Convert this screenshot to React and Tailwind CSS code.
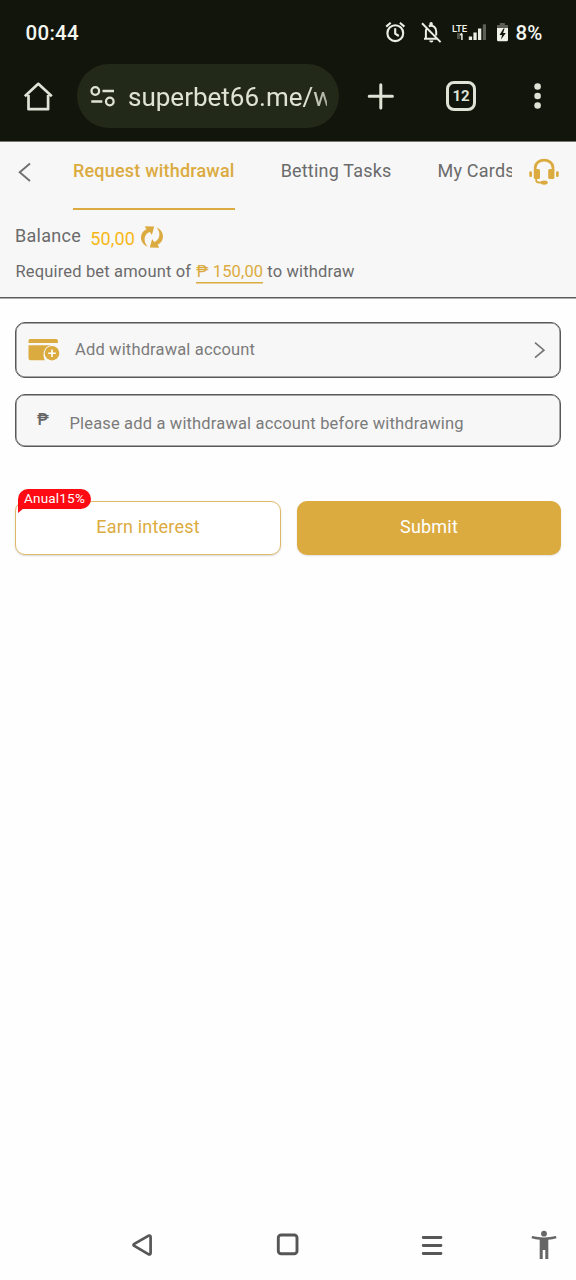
import React from "react";

function Icon({ box, className, children }) {
  const [, , w, h] = box.split(" ");
  return (
    <svg viewBox={box} width={w} height={h} fill="none" className={`shrink-0 ${className || ""}`}>
      {children}
    </svg>
  );
}

function StatusBar() {
  return (
    <div className="flex h-16 items-center pl-[25.5px] text-[#f4f5ef]">
      <span className="w-[358.5px] pt-0.5 text-[20.5px] font-medium tracking-[0.3px]">00:44</span>
      <Icon box="384 20 23 24">
        <g stroke="#eceee4" strokeWidth="2.1">
          <circle cx="395.3" cy="33.2" r="7.9" />
          <path d="M395.2 28.3v5.4l3.6 2.3M386.2 26.6l4.5-3.8M404.4 26.6l-4.5-3.8" />
        </g>
      </Icon>
      <Icon box="407 20 36 24">
        <path
          d="M425.9 39v-7.5c0-1.2.3-2.3.9-3.2M428.8 26.2c4-1.6 7.4 1 7.4 5.4v4M424 38.8h13.5M422 23.3l18.6 18.8"
          stroke="#eceee4"
          strokeWidth="2"
        />
        <path d="M429.4 25v-1.3a1.7 1.7 0 0 1 3.4 0V25zM429.2 40.5h4.2a2.1 2.1 0 0 1-4.2 0z" fill="#eceee4" />
      </Icon>
      <div className="relative ml-[9px] h-6 w-[36px]">
        <Icon box="452 20 36 24">
          <path d="M457 33h3.2v6H457z" fill="#4d4f48" />
          <path d="M461.9 40v-6.5M460.3 35.3l1.6-2" stroke="#eceee4" strokeWidth="1.5" />
          <path d="M468.8 36.5h3.3V40h-3.3zM473.4 32.5h3.3V40h-3.3zM478 28.6h3.3V40H478z" fill="#eceee4" />
          <path d="M482.800 24.300h3.200V40h-3.200z" fill="#5d5f57" />
        </Icon>
        <span className="absolute top-[4px] left-0 text-[9.5px] leading-[10px] font-medium">LTE</span>
      </div>
      <Icon box="488 20 28 24">
        <path d="M499.800 23h5v2h3.200v4.500h-11V25h2.800z" fill="#5d5f57" />
        <path d="M497 28h11v12a1.300 1.300 0 0 1-1.300 1.200h-8.400A1.300 1.300 0 0 1 497 40z" fill="#f1f3ea" />
        <path d="M503.500 28.500l-4 6.500h2.500l-1 4.500 4.800-6.500h-2.700l1.500-4.500z" fill="#12150c" />
      </Icon>
      <span className="-ml-[0.5px] pt-0.5 text-[20.5px] font-medium">8%</span>
    </div>
  );
}

function BrowserBar() {
  return (
    <div className="flex h-16 items-center">
      <Icon box="22 80 33 33" className="ml-[22px]">
        <path
          d="M28.500 95v14.200h19.600V95M24.800 96.200l13.500-12.400 13.500 12.400"
          stroke="#dfe3d6"
          strokeWidth="2.700"
          strokeLinejoin="round"
        />
      </Icon>
      <div className="ml-[22px] flex h-16 w-[262px] items-center rounded-full bg-[#232919] pl-[12px]">
        <Icon box="89 84 28 24">
          <g stroke="#dfe3d6" strokeWidth="2.300">
            <circle cx="95.300" cy="91" r="3.800" />
            <circle cx="109.800" cy="101.500" r="3.800" />
            <path d="M102.500 91h11.500M91.300 101.500h11" />
          </g>
        </Icon>
        <div className="ml-[11px] w-[199px] overflow-hidden pt-[2px] text-[26px] leading-8 whitespace-nowrap text-[#dfe3d6] [mask-image:linear-gradient(to_right,black_180px,transparent_245px)]">
          superbet66.me/w
        </div>
      </div>
      <Icon box="366 82 30 30" className="ml-[27px]">
        <path d="M369.200 97.300h23.200M380.800 85.700v23.200" stroke="#dfe3d6" strokeWidth="3" strokeLinecap="round" />
      </Icon>
      <div className="ml-[50px] flex size-[30px] items-center justify-center rounded-[8px] border-3 border-[#dfe3d6] text-[15px] font-bold text-[#dfe3d6]">
        12
      </div>
      <Icon box="530 80 15 32" className="ml-[54px]">
        <g fill="#dfe3d6">
          <circle cx="537.600" cy="86.500" r="3.300" />
          <circle cx="537.600" cy="96" r="3.300" />
          <circle cx="537.600" cy="105.500" r="3.300" />
        </g>
      </Icon>
    </div>
  );
}

const refreshArrow =
  "M147.500 246.500C139.300 243.500 138.800 232.500 146.400 229.200L144.800 226.300L154.200 226.600L151.900 235L149.800 232C144.800 233.500 142.300 240.500 147.500 246.500z";

function PageHead() {
  return (
    <section className="flex h-[157px] shrink-0 flex-col border-t border-b border-t-[#77776f] border-b-[#5c5c5f] bg-[#f7f7f7] text-[#6b6b6b] shadow-[0_0.5px_0_#5c5c5f]">
      <div className="flex h-[68px]">
        <Icon box="15 160 20 24" className="mt-[18px] ml-[15px]">
          <path d="M30 163.500L19.700 172.200l10.300 8.800" stroke="#707070" strokeWidth="1.900" />
        </Icon>
        <nav className="ml-[38px] flex w-[439px] gap-[46px] overflow-hidden text-[18px] leading-6 tracking-[0.200px] whitespace-nowrap">
          <div className="h-[68px] border-b-2 border-[#dcab40] pt-[17px] font-medium text-[#dcab40]">
            Request withdrawal
          </div>
          <div className="pt-[17px]">Betting Tasks</div>
          <div className="pt-[17px]">My Cards</div>
        </nav>
        <Icon box="528 157 32 30" className="mt-[15px] ml-4">
          <path d="M535.200 171v-3C535.200 157.600 553 157.600 553 168v3" stroke="#dcab40" strokeWidth="2.700" />
          <path d="M536.200 178v2.200c0 1.500 1.200 2.300 3 2.300h3" stroke="#dcab40" strokeWidth="1.800" />
          <g fill="#dcab40">
            <rect x="533.800" y="169" width="6.200" height="10" rx="1.500" />
            <rect x="548.200" y="169" width="6.200" height="10" rx="1.500" />
            <rect x="529.300" y="171.300" width="2.700" height="5.700" rx="1.200" />
            <rect x="556" y="171.300" width="2.700" height="5.700" rx="1.200" />
            <ellipse cx="544.200" cy="182.600" rx="3.500" ry="2.200" />
          </g>
        </Icon>
      </div>
      <div className="mt-[14px] flex h-6 pl-[15px] text-[18px] leading-6">
        <span className="tracking-[0.300px]">Balance</span>
        <span className="ml-[9px] pt-[3px] tracking-[0.150px] text-[#f6b715]">50,00</span>
        <Icon box="140 225 24 24" className="mt-px ml-[5px]">
          <g fill="#dcab40">
            <path d={refreshArrow} />
            <path d={refreshArrow} transform="rotate(180 152 237)" />
          </g>
        </Icon>
      </div>
      <div className="mt-[13px] flex pl-[15.500px] text-[16.500px] leading-[22px] tracking-[0.160px]">
        <span>Required bet amount of</span>
        <span className="ml-[5px] h-[22px] border-b border-[#dcab40] text-[#dcab40] shadow-[0_0.5px_0_#dcab40]">
          ₱ 150,00
        </span>
        <span className="ml-[4px]">to withdraw</span>
      </div>
    </section>
  );
}

export default function App() {
  return (
    <div className="flex h-[1280px] w-[576px] flex-col overflow-hidden bg-[#fefefe] font-['Roboto',sans-serif]">
      <header className="flex h-[141px] shrink-0 flex-col bg-[#12150c]">
        <StatusBar />
        <BrowserBar />
      </header>
      <PageHead />

      <main className="flex flex-1 flex-col px-[15px] pt-[24px]">
        <button className="flex h-[56px] w-[546px] items-center rounded-[10px] border border-[#58585a] bg-[#f7f7f7] text-[16.500px] tracking-[0.160px] text-[#7b7b7b] shadow-[inset_0_0_0_0.500px_#58585a]">
          <Icon box="28 338 33 24" className="ml-[12px]">
            <path
              d="M28.500 343v-2.300q0-1.700 1.700-1.700h26q1.700 0 1.700 1.700v2.300zM28.500 345.300h22.500c-5.500.5-9.500 7-6.300 14.900H30.500q-2 0-2-2z"
              fill="#dcab40"
            />
            <circle cx="52" cy="353.200" r="7.300" fill="#dcab40" />
            <path d="M52 349.400v7.600M48.200 353.200h7.600" stroke="#fff" strokeWidth="1.600" />
          </Icon>
          <span className="ml-[14px]">Add withdrawal account</span>
          <Icon box="532 340 16 20" className="mr-[12px] ml-auto">
            <path d="M535 342.700l8.900 7.500-8.900 7.500" stroke="#77777a" strokeWidth="1.700" />
          </Icon>
        </button>
        <div className="mt-4 flex h-[53px] w-[546px] items-center rounded-[10px] border border-[#58585a] bg-[#f7f7f7] text-[16.500px] tracking-[0.160px] text-[#7b7b7b] shadow-[inset_0_0_0_0.500px_#58585a]">
          <span className="mb-px ml-[21px] w-[32.500px] text-[16px] font-medium text-[#666]">₱</span>
          <span className="mt-[8px]">Please add a withdrawal account before withdrawing</span>
        </div>
        <div className="mt-[54px] flex gap-4 text-[18px] leading-6 tracking-[0.200px]">
          <button className="relative h-[54px] w-[266px] rounded-[10px] border border-[#dfb96a] bg-white pb-[2px] text-[#dcab40] shadow-[0_1px_2px_rgba(0,0,0,0.15)]">
            Earn interest
            <span className="absolute -top-[13px] left-[2px] flex h-5 w-[73px] items-center justify-center rounded-[10px] rounded-bl-none bg-[#fd0a12] pb-[3px] text-[13.500px] text-white">
              Anual15%
            </span>
            <Icon box="18 508 7 5" className="absolute top-[6px] left-[2px]">
              <path d="M18 508h6l-6 5z" fill="#fd0a12" />
            </Icon>
          </button>
          <button className="h-[54px] w-[264px] rounded-[10px] bg-[#dcab40] pb-[2px] text-white shadow-[0_1px_2px_rgba(0,0,0,0.12)]">
            Submit
          </button>
        </div>
      </main>

      <footer className="flex h-[72px] shrink-0 items-center pt-[2px]">
        <Icon box="130 1230 24 30" className="ml-[130px]">
          <path
            d="M148.300 1235.800l-14 8.100q-1.600 1 0 2l14 8.300q2.300.800 2.300-1.300v-16q0-2-2.300-1.100z"
            stroke="#565656"
            strokeWidth="2.700"
            strokeLinejoin="round"
          />
        </Icon>
        <Icon box="275 1230 25 30" className="ml-[121px]">
          <rect x="278.300" y="1235" width="18.700" height="18.700" rx="2.800" stroke="#565656" strokeWidth="2.900" />
        </Icon>
        <Icon box="420 1230 24 30" className="ml-[120px]">
          <path
            d="M423.200 1237.500h17.800M423.200 1245.500h17.800M423.200 1253.500h17.800"
            stroke="#565656"
            strokeWidth="2.800"
            strokeLinecap="round"
          />
        </Icon>
        <Icon box="530 1230 28 30" className="ml-[86px]">
          <g fill="#666">
            <circle cx="544" cy="1233.700" r="2.900" />
            <path d="M532 1236q12 2.800 24 0l.5 2.300q-4 1-8.200 1.500v19.200h-3v-9h-2.600v9h-3v-19.200q-4.200-.5-8.200-1.500z" />
          </g>
        </Icon>
      </footer>
    </div>
  );
}
